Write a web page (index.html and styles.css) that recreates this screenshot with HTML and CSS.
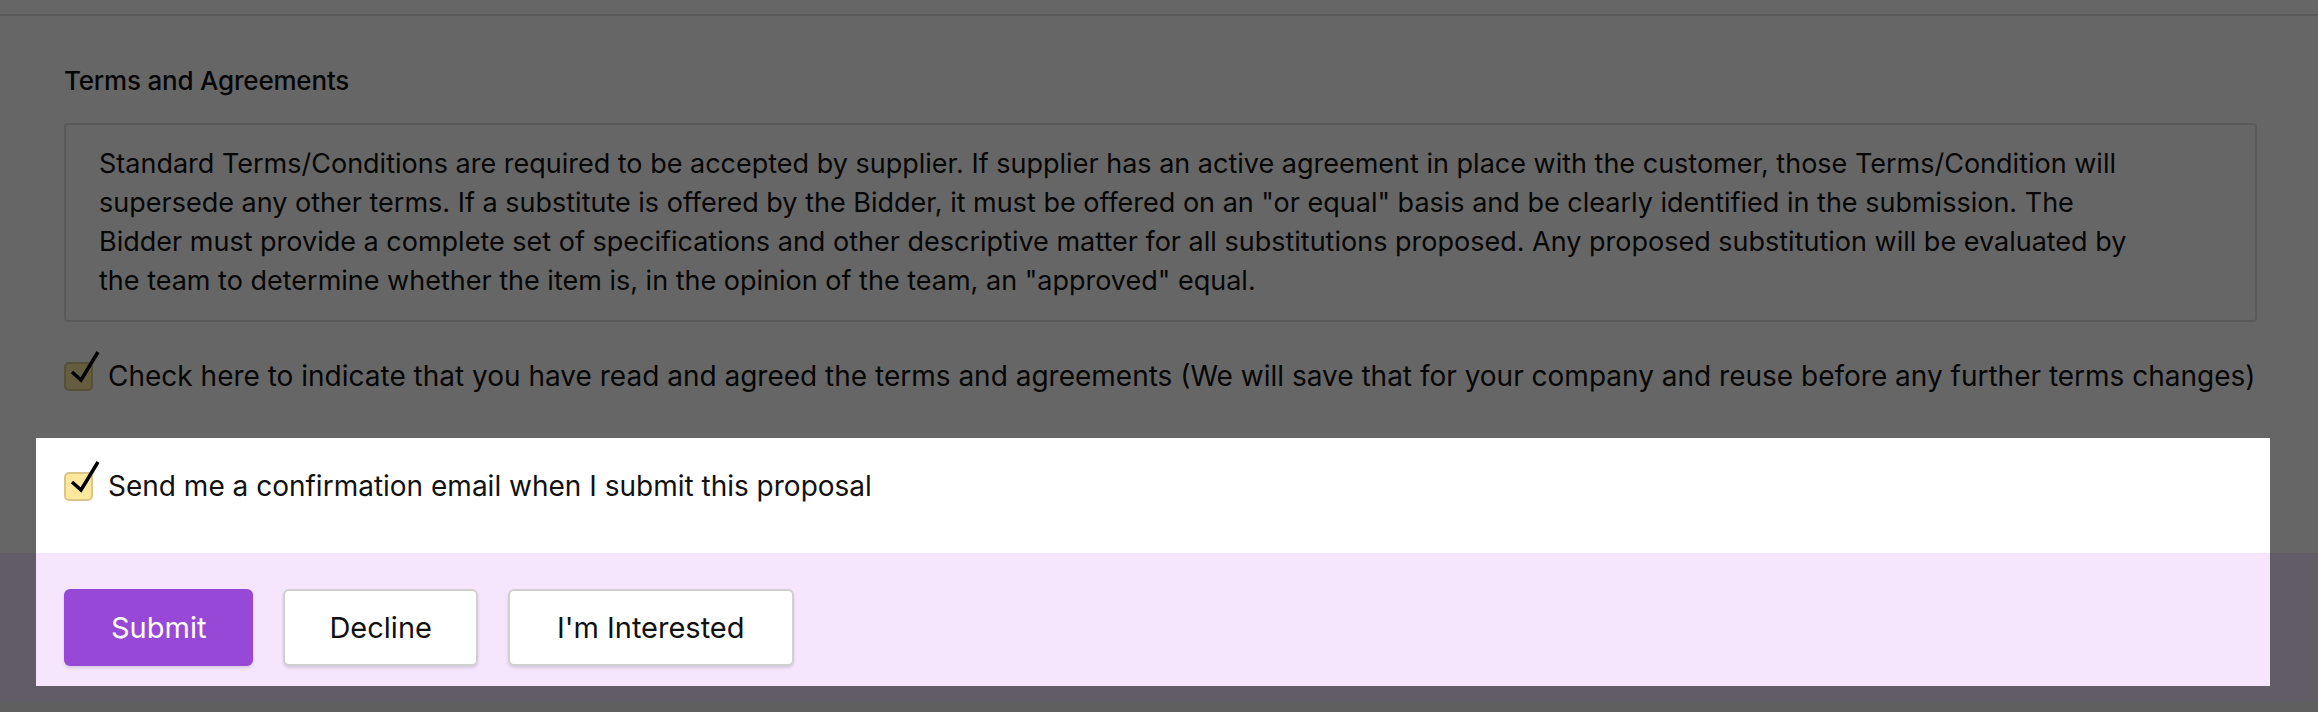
FILE: index.html
```html
<!DOCTYPE html>
<html lang="en">

<head>
    <meta charset="UTF-8">
    <meta name="viewport" content="width=device-width, initial-scale=1.0">
    <title>Proposal - Terms</title>
    <link rel="stylesheet" href="styles.css">
</head>

<body>
    <div class="top-bar"></div>

    <!-- Terms -->
    <div class="terms">
        <h3 class="terms-title">Terms and Agreements</h3>
        <div class="terms-box">
            Standard Terms/Conditions are required to be accepted by supplier. If supplier has an active agreement in place with the customer, those Terms/Condition will supersede any other terms. If a substitute is offered by the Bidder, it must be offered on an "or equal" basis and be clearly identified in the submission. The<br>
            Bidder must provide a complete set of specifications and other descriptive matter for all substitutions proposed. Any proposed substitution will be evaluated by<br>
            the team to determine whether the item is, in the opinion of the team, an "approved" equal.
        </div>
        <label class="check-row agree-row">
            <span class="checkbox">
                <svg class="tick" viewBox="0 0 40 42" width="40" height="42"><path d="M7 23 L16 31 L33 3" /></svg>
            </span>
            <span>Check here to indicate that you have read and agreed the terms and agreements (We will save that for your company and reuse before any further terms changes)</span>
        </label>
    </div>

    <!-- Confirmation -->
    <div class="confirm">
        <label class="check-row">
            <span class="checkbox">
                <svg class="tick" viewBox="0 0 40 42" width="40" height="42"><path d="M7 23 L16 31 L33 3" /></svg>
            </span>
            <span>Send me a confirmation email when I submit this proposal</span>
        </label>
    </div>

    <!-- Footer actions -->
    <div class="actions">
        <button class="btn btn-primary">Submit</button>
        <button class="btn">Decline</button>
        <button class="btn btn-wide">I'm Interested</button>
    </div>
    <div class="page-end"></div>

    <!-- Tour spotlight -->
    <div class="spotlight"></div>
</body>

</html>
```

FILE: styles.css
```css
body {
    margin: 0;
    width: 2318px;
    height: 712px;
    overflow: hidden;
    background: #fff;
    font-family: Inter, "Noto Sans", sans-serif;
    color: #111;
    position: relative;
}

.top-bar {
    height: 14px;
    border-bottom: 2px solid #e2e2e2;
}

.terms {
    padding: 0 61px 0 64px;
}

.terms-title {
    margin: 0;
    padding-top: 50px;
    font-size: 26px;
    font-weight: 500;
    line-height: 30px;
    letter-spacing: -0.2px;
}

.terms-box {
    margin-top: 27px;
    border: 2px solid #e2e2e2;
    border-radius: 4px;
    padding: 19px 62px 0 33px;
    font-size: 27px;
    line-height: 39px;
    box-sizing: border-box;
    height: 199px;
}

.check-row {
    display: flex;
    align-items: center;
    gap: 15px;
    font-size: 28px;
    line-height: 34px;
}

.agree-row {
    margin-top: 37px;
}

.checkbox {
    position: relative;
    flex: none;
    width: 29px;
    height: 29px;
    box-sizing: border-box;
    background: #fde89e;
    border: 2px solid #dcc58a;
    border-radius: 5px;
}

.tick {
    position: absolute;
    left: -1px;
    top: -15px;
    fill: none;
    stroke: #000;
    stroke-width: 3.5;
}

.confirm {
    height: 160px;
    box-sizing: border-box;
    padding: 76px 64px 0;
}

.actions {
    height: 149px;
    box-sizing: border-box;
    padding: 36px 64px 0;
    background: #f5e6fe;
    display: flex;
    align-items: flex-start;
    gap: 30px;
}

.btn {
    height: 77px;
    padding: 0 44px;
    font-family: Inter, "Noto Sans", sans-serif;
    font-size: 29px;
    color: #111;
    background: #fff;
    border: 2px solid #d0d0d0;
    border-radius: 6px;
    box-shadow: 0 2px 3px rgba(0, 0, 0, 0.12);
    cursor: pointer;
}

.btn-primary {
    background: #9848d6;
    border-color: #9848d6;
    color: #fff;
    padding: 0 45px;
}

.btn-wide {
    padding: 0 47px;
}

.page-end {
    height: 10px;
    background: #ededed;
}

/* dims everything except the highlighted area */
.spotlight {
    position: absolute;
    left: 36px;
    top: 438px;
    width: 2234px;
    height: 248px;
    box-shadow: 0 0 0 3000px rgba(0, 0, 0, 0.6);
    pointer-events: none;
}
```
